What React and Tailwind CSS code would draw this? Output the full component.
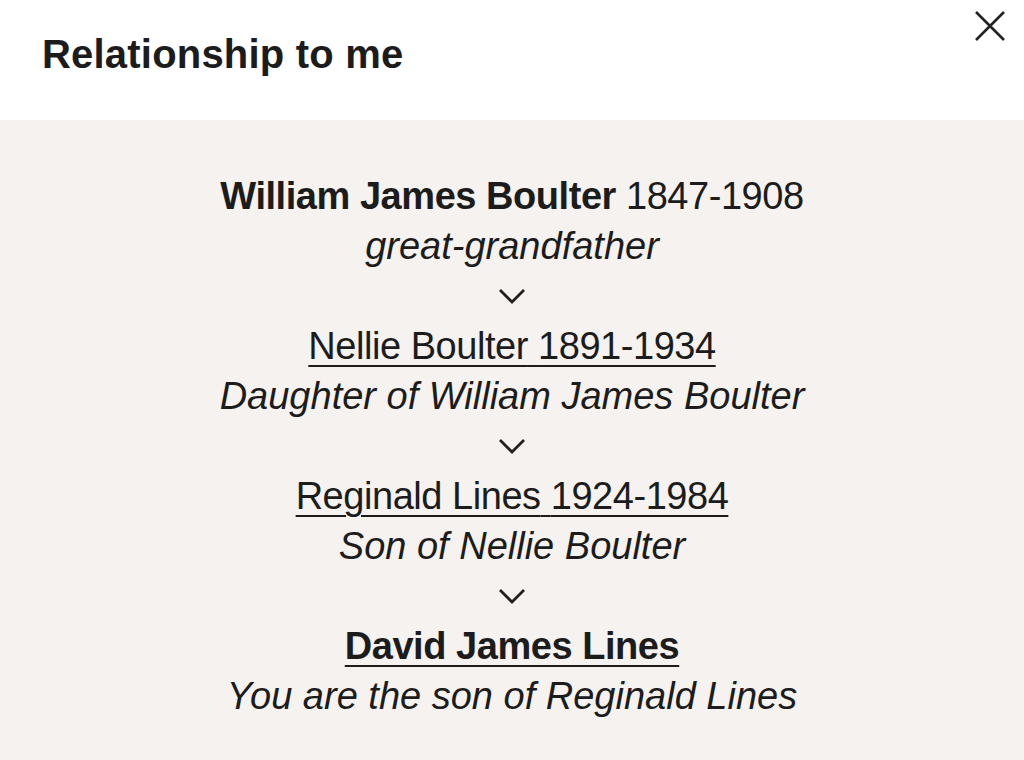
const path = [
  {
    name: 'William James Boulter',
    years: '1847-1908',
    relation: 'great-grandfather',
    bold: true,
    link: false,
  },
  {
    name: 'Nellie Boulter',
    years: '1891-1934',
    relation: 'Daughter of William James Boulter',
    link: true,
  },
  {
    name: 'Reginald Lines',
    years: '1924-1984',
    relation: 'Son of Nellie Boulter',
    link: true,
  },
  {
    name: 'David James Lines',
    relation: 'You are the son of Reginald Lines',
    bold: true,
    link: true,
  },
]

function Chevron() {
  return (
    <div className="flex h-[50px] items-center justify-center">
      <svg width="28" height="16" viewBox="0 0 28 16" fill="none">
        <polyline points="2,2 14,14 26,2" stroke="#1f1f1f" strokeWidth="2.8" />
      </svg>
    </div>
  )
}

export default function App() {
  return (
    <div className="flex h-[760px] w-[1024px] flex-col bg-white font-['Liberation_Sans',Arial,sans-serif] text-[#1c1c1c]">
      <div className="relative flex h-[120px] shrink-0 items-start px-[42px] pt-[32px]">
        <h2 className="text-[40px] font-bold leading-[44px] tracking-[0.005em]">Relationship to me</h2>
        <button className="absolute right-[18px] top-[10px] text-[#222]">
          <svg width="32" height="32" viewBox="0 0 32 32" fill="none">
            <path d="M2 2 L30 30 M30 2 L2 30" stroke="currentColor" strokeWidth="2.6" />
          </svg>
        </button>
      </div>

      <div className="flex flex-1 flex-col items-center bg-[#f5f2ef] pt-[51px] text-[38px] leading-[50px] tracking-[-0.012em]">
        {path.map((p, i) => (
          <div key={p.name} className="flex flex-col items-center">
            {i > 0 && <Chevron />}
            <div
              className={
                p.link
                  ? 'underline decoration-[2px] underline-offset-[6px]'
                  : ''
              }
            >
              <span className={p.bold ? 'font-bold' : ''}>{p.name}</span>
              {p.years && <span> {p.years}</span>}
            </div>
            <div className="italic tracking-normal">{p.relation}</div>
          </div>
        ))}
      </div>
    </div>
  )
}
